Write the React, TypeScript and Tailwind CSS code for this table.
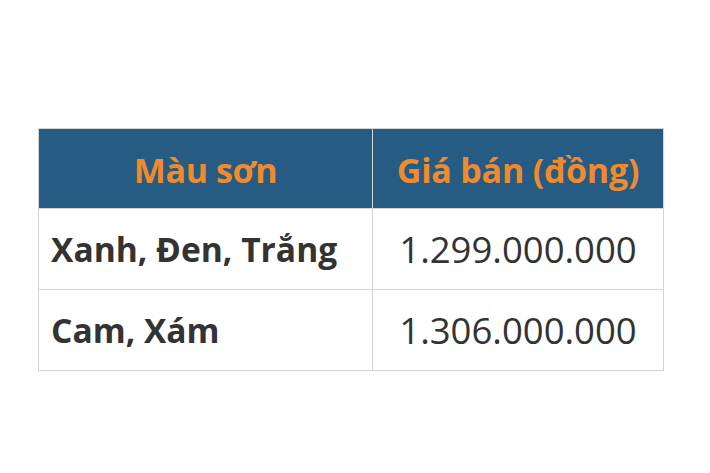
export default function App() {
  const rows = [
    { color: 'Xanh, Đen, Trắng', price: '1.299.000.000' },
    { color: 'Cam, Xám', price: '1.306.000.000' },
  ];

  return (
    <div className="w-[710px] h-[473px] bg-white pt-[128px] pl-[38px]" style={{ fontFamily: '"Open Sans", sans-serif' }}>
      <table className="w-[626px] border-collapse border border-[#d4d4d4] text-[#333333]">
        <thead>
          <tr className="bg-[#265b84] h-[80px]">
            <th className="w-[334px] border border-[#d4d4d4] pt-1 text-center text-[34px] font-bold tracking-[-0.4px] text-[#f08a2c]">Màu sơn</th>
            <th className="border border-[#d4d4d4] pt-1 text-center text-[34px] font-bold tracking-[-0.2px] text-[#f08a2c]">Giá bán (đồng)</th>
          </tr>
        </thead>
        <tbody>
          {rows.map((row) => (
            <tr key={row.price} className="h-[81px]">
              <td className="border border-[#d4d4d4] px-3 text-left text-[33.6px] font-bold">{row.color}</td>
              <td className="border border-[#d4d4d4] text-center text-[36.5px]">{row.price}</td>
            </tr>
          ))}
        </tbody>
      </table>
    </div>
  );
}
